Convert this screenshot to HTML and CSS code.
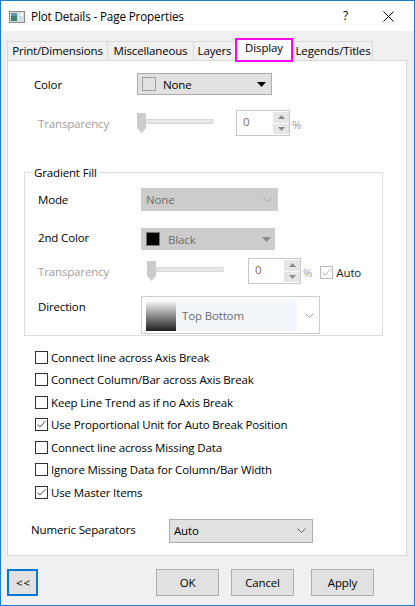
FILE: index.html
```html
<!DOCTYPE html>
<html>
<head>
<meta charset="utf-8">
<link rel="stylesheet" href="styles.css">
</head>
<body>
<div class="window">
  <div class="titlebar">
    <svg class="appicon" width="16" height="12" viewBox="0 0 16 12">
      <rect x="0.5" y="0.5" width="15" height="11" fill="#dcdcdc" stroke="#8a8a8a"/>
      <rect x="2" y="2" width="6" height="8" fill="#3f7f6c"/>
      <rect x="2" y="2" width="6" height="3" fill="#5a9aa8"/>
      <rect x="9" y="2" width="5" height="8" fill="#cfe0ea"/>
      <rect x="11" y="2" width="3" height="3" fill="#ffffff"/>
    </svg>
    <span class="title">Plot Details - Page Properties</span>
    <span class="help">?</span>
    <svg class="close" width="11" height="11" viewBox="0 0 11 11">
      <path d="M0.5 0.5 L10.5 10.5 M10.5 0.5 L0.5 10.5" stroke="#000" stroke-width="1"/>
    </svg>
  </div>
  <div class="body">
    <div class="tabs">
      <div class="tab w1">Print/Dimensions</div>
      <div class="tab w2">Miscellaneous</div>
      <div class="tab w3">Layers</div>
      <div class="tab active">Display</div>
      <div class="tab w5">Legends/Titles</div>
    </div>
    <div class="panel">
      <div class="row r-color">
        <span class="lbl l-color">Color</span>
        <div class="combo c-color">
          <span class="swatch sw-none"></span>
          <span class="ctext">None</span>
          <svg class="tri" width="9" height="5" viewBox="0 0 9 5"><path d="M0 0 H9 L4.5 5 Z" fill="#000"/></svg>
        </div>
      </div>
      <div class="row r-trans1">
        <span class="lbl dis l-trans1">Transparency</span>
        <svg class="slider" width="77" height="21" viewBox="0 0 77 21">
          <rect x="9" y="6.5" width="67" height="4" fill="#e7e7e7" stroke="#d8d8d8"/>
          <path d="M0 0 H9 V15 L4.5 20 L0 15 Z" fill="#cccccc"/>
        </svg>
        <div class="spin s1">
          <span class="spinval">0</span>
          <div class="spinbtns">
            <span class="sb"><svg width="7" height="4" viewBox="0 0 7 4"><path d="M0 4 L3.5 0 L7 4 Z" fill="#8a8a8a"/></svg></span>
            <span class="sb"><svg width="7" height="4" viewBox="0 0 7 4"><path d="M0 0 H7 L3.5 4 Z" fill="#8a8a8a"/></svg></span>
          </div>
        </div>
        <span class="pct dis">%</span>
      </div>

      <div class="group">
        <div class="legend">Gradient Fill</div>
        <div class="row r-mode">
          <span class="lbl gl">Mode</span>
          <div class="combo c-mode dcombo">
            <span class="ctext dtext">None</span>
            <svg class="chev" width="9" height="5" viewBox="0 0 9 5"><path d="M0.5 0.5 L4.5 4.5 L8.5 0.5" fill="none" stroke="#a0a0a0"/></svg>
          </div>
        </div>
        <div class="row r-2nd">
          <span class="lbl gl l-2nd">2nd Color</span>
          <div class="combo c-2nd dcombo">
            <span class="swatch sw-black"></span>
            <span class="ctext dtext">Black</span>
            <svg class="tri" width="9" height="5" viewBox="0 0 9 5"><path d="M0 0 H9 L4.5 5 Z" fill="#8a8a8a"/></svg>
          </div>
        </div>
        <div class="row r-trans2">
          <span class="lbl dis gl">Transparency</span>
          <svg class="slider" width="77" height="21" viewBox="0 0 77 21">
            <rect x="9" y="6.5" width="67" height="4" fill="#e7e7e7" stroke="#d8d8d8"/>
            <path d="M0 0 H9 V15 L4.5 20 L0 15 Z" fill="#cccccc"/>
          </svg>
          <div class="spin s2">
            <span class="spinval">0</span>
            <div class="spinbtns">
              <span class="sb"><svg width="7" height="4" viewBox="0 0 7 4"><path d="M0 4 L3.5 0 L7 4 Z" fill="#8a8a8a"/></svg></span>
              <span class="sb"><svg width="7" height="4" viewBox="0 0 7 4"><path d="M0 0 H7 L3.5 4 Z" fill="#8a8a8a"/></svg></span>
            </div>
          </div>
          <span class="pct dis">%</span>
          <span class="cb cb-dis"><svg width="11" height="11" viewBox="0 0 11 11"><path d="M1.5 5.5 L4 8 L9.5 2" fill="none" stroke="#bdbdbd" stroke-width="1"/></svg></span>
          <span class="auto">Auto</span>
        </div>
        <div class="row r-dir">
          <span class="lbl gl l-dir">Direction</span>
          <div class="dircombo">
            <div class="dirinner">
              <span class="grad"></span>
              <span class="ctext dtext">Top Bottom</span>
            </div>
            <svg class="chev" width="9" height="5" viewBox="0 0 9 5"><path d="M0.5 0.5 L4.5 4.5 L8.5 0.5" fill="none" stroke="#a8a8a8"/></svg>
          </div>
        </div>
      </div>

      <div class="checks">
        <div class="chk"><span class="cb"></span><span>Connect line across Axis Break</span></div>
        <div class="chk"><span class="cb"></span><span>Connect Column/Bar across Axis Break</span></div>
        <div class="chk"><span class="cb"></span><span>Keep Line Trend as if no Axis Break</span></div>
        <div class="chk"><span class="cb"><svg width="11" height="11" viewBox="0 0 11 11"><path d="M1.5 5.5 L4 8 L9.5 2" fill="none" stroke="#555" stroke-width="1"/></svg></span><span>Use Proportional Unit for Auto Break Position</span></div>
        <div class="chk"><span class="cb"></span><span>Connect line across Missing Data</span></div>
        <div class="chk"><span class="cb"></span><span>Ignore Missing Data for Column/Bar Width</span></div>
        <div class="chk"><span class="cb"><svg width="11" height="11" viewBox="0 0 11 11"><path d="M1.5 5.5 L4 8 L9.5 2" fill="none" stroke="#555" stroke-width="1"/></svg></span><span>Use Master Items</span></div>
      </div>

      <div class="row r-num">
        <span class="lbl l-num">Numeric Separators</span>
        <div class="combo c-num">
          <span class="ctext">Auto</span>
          <svg class="chev" width="9" height="5" viewBox="0 0 9 5"><path d="M0.5 0.5 L4.5 4.5 L8.5 0.5" fill="none" stroke="#606060"/></svg>
        </div>
      </div>
    </div>
    <div class="footer">
      <div class="btn back">&lt; &lt;</div>
      <div class="btn ok">OK</div>
      <div class="btn cancel">Cancel</div>
      <div class="btn apply">Apply</div>
    </div>
  </div>
</div>
</body>
</html>
```

FILE: styles.css
```css
* { box-sizing: border-box; }
html, body { margin: 0; padding: 0; }
body {
  font-family: "Open Sans", "Noto Sans", sans-serif;
  font-size: 11.5px;
  letter-spacing: -0.15px;
  color: #000;
  background: #fff;
}
.window {
  width: 415px;
  height: 606px;
  border: 1px solid #1a7fd4;
  background: #f0f0f0;
  display: flex;
  flex-direction: column;
}
.titlebar {
  height: 30px;
  background: #fff;
  display: flex;
  align-items: center;
  flex: none;
}
.appicon { margin-left: 8px; margin-top: 1px; flex: none; }
.title { margin-left: 6px; font-size: 11.7px; flex: 1; margin-top: -1px; }
.help { width: 20px; margin-right: 20px; font-size: 12px; margin-top: -1px; }
.close { margin-right: 20px; }

.body { flex: 1; display: flex; flex-direction: column; }
.tabs {
  height: 29px;
  display: flex;
  align-items: flex-end;
  padding-left: 6px;
  position: relative;
  z-index: 2;
}
.tab {
  height: 19px;
  border: 1px solid #d9d9d9;
  border-bottom: none;
  margin-right: -1px;
  display: flex;
  align-items: center;
  justify-content: center;
  background: #f0f0f0;
  white-space: nowrap;
  line-height: 1;
  padding-bottom: 1px;
}
.w1 { width: 101px; }
.w2 { width: 87px; }
.w3 { width: 43px; }
.w5 { width: 80px; margin-left: 1px; }
.tab.active {
  width: 58px;
  height: 24px;
  border: 2px solid #f0f;
  background: #fff;
  margin-bottom: -2px;
  padding-bottom: 5px;
  margin-left: 0;
}

.panel {
  margin-left: 6px;
  width: 400px;
  height: 496px;
  border: 1px solid #d9d9d9;
  background: #fff;
  display: flex;
  flex-direction: column;
  position: relative;
  z-index: 1;
}
.row { display: flex; align-items: center; flex: none; }
.lbl { white-space: nowrap; flex: none; }
.dis { color: #a0a0a0; }

.r-color { margin-top: 12px; height: 22px; padding-left: 26px; }
.l-color { width: 103px; }
.combo {
  display: flex;
  align-items: center;
  border: 1px solid #adadad;
  background: #e1e1e1;
  position: relative;
  flex: none;
}
.c-color { width: 135px; height: 22px; }
.swatch { width: 14px; height: 14px; margin-left: 4px; flex: none; }
.sw-none { border: 1px solid #a0a0a0; background: #e1e1e1; }
.sw-black { background: #000; border: 1px solid #777; width: 14px; height: 14px; }
.ctext { margin-left: 7px; flex: 1; white-space: nowrap; }
.tri { margin-right: 5px; flex: none; }
.chev { margin-right: 5px; flex: none; }

.r-trans1 { margin-top: 15px; height: 26px; padding-left: 30px; }
.l-trans1 { width: 99px; }
.slider { flex: none; margin-top: 1px; }
.spin {
  display: flex;
  border: 1px solid #c8c8c8;
  background: #fff;
  height: 26px;
  flex: none;
}
.s1 { margin-left: 22px; width: 54px; }
.s2 { margin-left: 24px; width: 53px; }
.spinval { flex: 1; padding-left: 6px; padding-top: 3px; color: #8a6a50; }
.spinbtns { width: 17px; display: flex; flex-direction: column; gap: 1px; background: #fff; padding: 1px 0 1px 1px; }
.sb { flex: 1; background: #e6e6e6; display: flex; align-items: center; justify-content: center; }
.pct { margin-left: 2px; margin-top: 3px; }

.group {
  margin-top: 36px;
  margin-left: 16px;
  width: 359px;
  height: 164px;
  border: 1px solid #dcdcdc;
  flex: none;
  display: flex;
  flex-direction: column;
}
.legend {
  margin-top: -9px;
  margin-left: 7px;
  padding: 0 2px;
  height: 17px;
  background: #fff;
  align-self: flex-start;
  line-height: 17px;
}
.gl { width: 103px; }
.l-2nd { margin-top: -3px; }
.r-mode { margin-top: 7px; height: 23px; padding-left: 13px; }
.dcombo { background: #cccccc; border-color: #cccccc; }
.dtext { color: #6d6d6d; }
.c-mode { width: 137px; height: 23px; }
.c-mode .ctext { margin-left: 4px; }
.r-2nd { margin-top: 17px; height: 22px; padding-left: 13px; }
.c-2nd { width: 134px; height: 22px; }
.c-2nd .ctext { margin-left: 8px; }
.c-2nd .tri { margin-right: 3px; }

.r-trans2 { margin-top: 8px; height: 26px; padding-left: 13px; }
.r-trans2 .slider { margin-left: 6px; }
.cb {
  width: 13px;
  height: 13px;
  border: 1px solid #333;
  background: #fff;
  flex: none;
  display: flex;
  align-items: center;
  justify-content: center;
}
.cb-dis { border-color: #bcbcbc; margin-left: 8px; margin-top: 3px; }
.auto { margin-left: 3px; margin-top: 3px; color: #222; }

.r-dir { margin-top: 12px; height: 38px; padding-left: 13px; align-items: flex-start; }
.l-dir { margin-top: 3px; }
.dircombo {
  width: 179px;
  height: 38px;
  border: 1px solid #cfcfcf;
  background: #fff;
  display: flex;
  align-items: center;
  padding: 3px 0 2px 4px;
  flex: none;
}
.dirinner {
  width: 155px;
  height: 100%;
  background: #f2f6fb;
  display: flex;
  align-items: center;
  margin-right: 8px;
}
.grad {
  width: 30px;
  height: 100%;
  background: linear-gradient(#ffffff, #1e1e1e);
  flex: none;
}
.dirinner .ctext { margin-left: 6px; }

.checks { margin-top: 10px; padding-left: 27px; flex: none; }
.chk { height: 22.5px; display: flex; align-items: center; }
.chk .cb { margin-right: 3px; }

.r-num { margin-top: 15px; height: 24px; padding-left: 23px; }
.l-num { width: 138px; margin-top: -3px; }
.c-num { width: 144px; height: 24px; }
.c-num .ctext { margin-left: 4px; }
.c-num .chev { margin-right: 6px; }

.footer {
  display: flex;
  align-items: center;
  padding-top: 13px;
  padding-left: 6px;
}
.btn {
  height: 27px;
  border: 1px solid #adadad;
  background: #e1e1e1;
  display: flex;
  align-items: center;
  justify-content: center;
  flex: none;
}
.back { width: 31px; border: 2px solid #0078d7; letter-spacing: -1px; }
.ok { width: 63px; margin-left: 118px; }
.cancel { width: 63px; margin-left: 12px; }
.apply { width: 63px; margin-left: 17px; }
```
